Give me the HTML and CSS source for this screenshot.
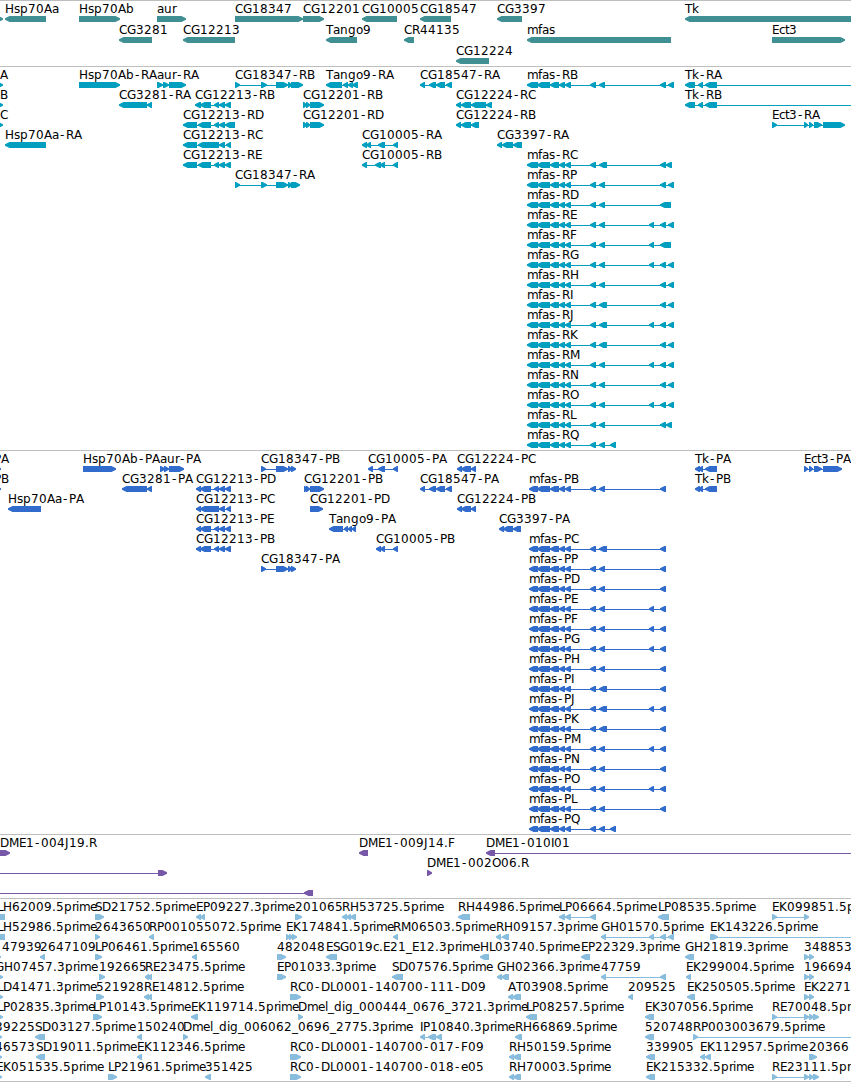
FILE: index.html
```html
<!DOCTYPE html>
<html>
<head>
    <meta charset="utf-8">
    <title>Genome Browser</title>
    <link rel="stylesheet" href="styles.css">
</head>
<body>
    <div class="browser">
        <svg class="track genes" id="genes"></svg>
        <svg class="track transcripts" id="transcripts"></svg>
        <svg class="track proteins" id="proteins"></svg>
        <svg class="track bacs" id="bacs"></svg>
        <svg class="track ests" id="ests"></svg>
    </div>
    <script src="tracks.js"></script>
</body>
</html>
```

FILE: styles.css
```css
body {
    margin: 0;
    background-color: #fff;
}

.browser {
    display: flex;
    flex-direction: column;
    width: 851px;
    height: 1082px;
    overflow: hidden;
}

.track {
    display: block;
    box-sizing: border-box;
    flex: none;
    width: 851px;
    border-top: 1px solid #bebebe;
    overflow: hidden;
}

.track text {
    font-family: "DejaVu Sans", sans-serif;
    font-size: 12px;
    fill: #000;
}

.genes {
    height: 66px;
    color: #3f8f93;
}

.transcripts {
    height: 384px;
    color: #009fbf;
}

.proteins {
    height: 384px;
    color: #316ccc;
}

.bacs {
    height: 64px;
    color: #7757a7;
}

.ests {
    height: 184px;
    color: #88bddd;
    border-bottom: 1px solid #bebebe;
}

.exon {
    fill: currentColor;
}

.intron {
    fill: currentColor;
}
```

FILE: tracks.js
```js
// each feature: [label, label x, row, strand, exons]
var genes = [
    ["", 0, 0, ">", "-20:3"],
    ["Hsp70Aa", 5, 0, "<", "5:46"],
    ["Hsp70Ab", 79, 0, ">", "79:120"],
    ["CG3281", 119, 1, "<", "119:152"],
    ["aur", 157, 0, ">", "157:186"],
    ["CG12213", 183, 1, "<", "183:235"],
    ["CG18347", 235, 0, ">", "235:303"],
    ["CG12201", 303, 0, ">", "303:324"],
    ["Tango9", 326, 1, "<", "326:357"],
    ["CG10005", 362, 0, "<", "362:397"],
    ["CR44135", 404, 1, "<", "404:414"],
    ["CG18547", 420, 0, "<", "420:451"],
    ["CG12224", 456, 2, "<", "456:489"],
    ["CG3397", 497, 0, "<", "497:522"],
    ["mfas", 527, 1, "<", "527:671"],
    ["Tk", 685, 0, "<", "685:900"],
    ["Ect3", 772, 1, ">", "772:845"]
];

var transcripts = [
    ["A", 0, 0, ">", "-20:3"],
    ["B", 0, 1, ">", "-20:3"],
    ["C", 0, 2, ">", "-20:3"],
    ["Hsp70Aa-RA", 5, 3, "<", "5:46"],
    ["Hsp70Ab-RA", 79, 0, ">", "79:120"],
    ["CG3281-RA", 119, 1, "<", "119:147 147:152"],
    ["aur-RA", 157, 0, ">", "157:163 163:169 169:186"],
    ["CG12213-RB", 195, 1, "<", "195:201 200:211 214:219 219:225 225:231"],
    ["CG12213-RD", 183, 2, "<", "183:197 198:211 214:219 219:225 225:235"],
    ["CG12213-RC", 183, 3, "<", "183:197 198:219 219:225 226:231"],
    ["CG12213-RE", 183, 4, "<", "183:197 198:211 214:219 219:225 225:231"],
    ["CG18347-RB", 235, 0, ">", "235:240 261:267 276:283 279:288 288:292 291:303"],
    ["CG18347-RA", 235, 5, ">", "235:240 261:267 276:283 279:288 288:292 291:300"],
    ["CG12201-RB", 303, 1, ">", "303:307 306:310 310:324"],
    ["CG12201-RD", 303, 2, ">", "303:307 306:310 310:324"],
    ["Tango9-RA", 326, 0, "<", "326:342 343:348 348:353 352:358"],
    ["CG10005-RA", 362, 3, "<", "362:367 366:371 378:385 393:398"],
    ["CG10005-RB", 362, 4, "<", "362:367 375:381 380:385 393:398"],
    ["CG18547-RA", 420, 0, "<", "420:425 429:436 436:445 446:452"],
    ["CG12224-RC", 456, 1, "<", "456:461 461:471 471:486 486:492"],
    ["CG12224-RB", 456, 2, "<", "456:461 461:471 471:479"],
    ["CG3397-RA", 497, 3, "<", "497:502 502:513 513:522"],
    ["Tk-RA", 685, 0, "<", "685:695 698:703 705:717 900:910"],
    ["Tk-RB", 685, 1, "<", "685:695 698:703 705:717 900:910"],
    ["Ect3-RA", 772, 2, ">", "772:777 804:808 809:813 814:822 823:845"]
];

var proteins = [
    ["PA", -6, 0, ">", "-20:1"],
    ["PB", -6, 1, ">", "-20:1"],
    ["Hsp70Aa-PA", 8, 2, "<", "8:41"],
    ["Hsp70Ab-PA", 83, 0, ">", "83:116"],
    ["CG3281-PA", 122, 1, "<", "122:147 147:152"],
    ["aur-PA", 160, 0, ">", "160:165 164:169 169:184"],
    ["CG12213-PD", 196, 1, "<", "196:201 200:211 214:219 219:225 225:231"],
    ["CG12213-PC", 196, 2, "<", "196:201 200:219 219:225 226:231"],
    ["CG12213-PE", 196, 3, "<", "196:201 200:211 214:219 219:225 225:231"],
    ["CG12213-PB", 196, 4, "<", "196:201 200:211 214:219 219:225 225:231"],
    ["CG18347-PB", 261, 0, ">", "261:266 276:283 279:288 288:292 291:296"],
    ["CG18347-PA", 261, 5, ">", "261:266 276:283 279:288 288:292 291:296"],
    ["CG12201-PB", 304, 1, ">", "304:308 306:310 310:324"],
    ["CG12201-PD", 310, 2, ">", "310:323"],
    ["Tango9-PA", 329, 3, "<", "329:343 344:348 348:352 352:356"],
    ["CG10005-PA", 368, 0, "<", "368:373 378:385 393:398"],
    ["CG10005-PB", 376, 4, "<", "376:381 380:385 393:398"],
    ["CG18547-PA", 420, 1, "<", "420:425 429:436 436:445 446:452"],
    ["CG12224-PC", 457, 0, "<", "457:462 461:471 471:476"],
    ["CG12224-PB", 457, 2, "<", "457:462 461:471 471:476"],
    ["CG3397-PA", 499, 3, "<", "499:504 503:513 513:521"],
    ["Tk-PA", 695, 0, "<", "695:700 698:703 705:717"],
    ["Tk-PB", 695, 1, "<", "695:700 698:703 705:717"],
    ["Ect3-PA", 804, 0, ">", "804:808 809:813 814:822 823:842"]
];

// mfas isoforms: [letter, row, end of the 599 exon, exons after it]
var mfasTranscripts = [
    ["B", 0, 605, "660:666 668:674"],
    ["C", 4, 607, "660:666 666:672"],
    ["P", 5, 605, "660:666 668:674"],
    ["D", 6, 605, "660:671"],
    ["E", 7, 605, "649:654 660:666 668:674"],
    ["F", 8, 605, "649:654 660:671"],
    ["G", 9, 605, "649:654 660:666 668:674"],
    ["H", 10, 605, "660:666 668:674"],
    ["I", 11, 607, "660:666 668:674"],
    ["J", 12, 607, "649:654 660:666 668:674"],
    ["K", 13, 607, "660:666 668:674"],
    ["M", 14, 605, "649:654 660:666 668:674"],
    ["N", 15, 605, "660:666 668:674"],
    ["O", 16, 605, "649:654 660:666 668:674"],
    ["L", 17, 605, "660:666 666:672"],
    ["Q", 18, 605, "610:616"]
];

var mfasProteins = [
    ["B", 1, 605, "660:666"],
    ["C", 4, 607, "660:666"],
    ["P", 5, 605, "660:666"],
    ["D", 6, 605, "660:666"],
    ["E", 7, 605, "649:654 660:666"],
    ["F", 8, 605, "649:654 660:666"],
    ["G", 9, 605, "649:654 660:666"],
    ["H", 10, 605, "660:666"],
    ["I", 11, 607, "660:666"],
    ["J", 12, 607, "649:654 660:666"],
    ["K", 13, 607, "660:666"],
    ["M", 14, 605, "649:654 660:666"],
    ["N", 15, 605, "660:666"],
    ["O", 16, 605, "649:654 660:666"],
    ["L", 17, 605, "660:666"],
    ["Q", 18, 605, "610:616"]
];

mfasTranscripts.forEach(function(m) {
    transcripts.push(["mfas-R" + m[0], 527, m[1], "<",
        "527:538 537:550 550:559 559:565 565:571 590:596 599:" + m[2] + " " + m[3]]);
});

mfasProteins.forEach(function(m) {
    proteins.push(["mfas-P" + m[0], 529, m[1], "<",
        "529:538 537:550 550:559 559:565 565:571 590:596 599:" + m[2] + " " + m[3]]);
});

var bacs = [
    ["DME1-004J19.R", 0, 0, ">", "-6:10"],
    ["DME1-009J14.F", 359, 0, "<", "359:368"],
    ["DME1-010I01", 486, 0, "<", "486:495 900:910"],
    ["", 0, 1, ">", "-20:-10 158:167"],
    ["DME1-002O06.R", 427, 1, ">", "427:432"],
    ["", 0, 2, "<", "-20:-10 304:313"]
];

var ests = [
    ["LH62009.5prime", -3, 0, "<", "-12:5"],
    ["SD21752.5prime", 95, 0, ">", "95:104"],
    ["EP09227.3prime", 196, 0, "<", "196:201 200:205"],
    ["201065", 295, 0, ">", "295:302"],
    ["RH53725.5prime", 342, 0, "<", "342:347 346:351 350:356"],
    ["RH44986.5prime", 458, 0, "<", "458:470"],
    ["LP06664.5prime", 559, 0, "<", "559:565 565:571 590:596"],
    ["LP08535.5prime", 658, 0, "<", "658:669"],
    ["EK099851.5prime", 772, 0, ">", "772:777 804:809"],

    ["LH52986.5prime", -3, 1, "<", "-12:5"],
    ["2643650", 95, 1, ">", "95:100"],
    ["RP001055072.5prime", 149, 1, "<", "149:154"],
    ["EK174841.5prime", 286, 1, ">", "286:290 289:293 292:297"],
    ["RM06503.5prime", 393, 1, "<", "393:398"],
    ["RH09157.3prime", 496, 1, "<", "496:501 502:509"],
    ["GH01570.5prime", 601, 1, "<", "601:606 649:654 660:666 668:674"],
    ["EK143226.5prime", 710, 1, ">", "710:718 900:910"],

    ["47939", 2, 2, ">", "-8:1"],
    ["2647109", 40, 2, "<", "40:45"],
    ["LP06461.5prime", 95, 2, ">", "95:102"],
    ["165560", 192, 2, "<", "192:197"],
    ["482048", 277, 2, ">", "277:286"],
    ["ESG019c.E21_E12.3prime", 326, 2, "<", "326:337"],
    ["HL03740.5prime", 480, 2, "<", "480:489"],
    ["EP22329.3prime", 581, 2, "<", "581:590"],
    ["GH21819.3prime", 685, 2, "<", "685:694"],
    ["348853", 804, 2, ">", "804:809 809:814"],

    ["GH07457.3prime", -5, 3, ">", "-8:3"],
    ["192665", 99, 3, ">", "99:105"],
    ["RE23475.5prime", 145, 3, "<", "145:149 147:152"],
    ["EP01033.3prime", 277, 3, ">", "277:286"],
    ["SD07576.5prime", 392, 3, "<", "392:403"],
    ["GH02366.3prime", 497, 3, "<", "497:502 501:509"],
    ["47759", 601, 3, "<", "601:606 660:666"],
    ["EK299004.5prime", 686, 3, "<", "686:691"],
    ["196694", 804, 3, ">", "804:809 809:814"],

    ["LD41471.3prime", -3, 4, ">", "-8:3"],
    ["521928", 96, 4, ">", "96:104"],
    ["RE14812.5prime", 144, 4, "<", "144:149 147:152"],
    ["RC0-DL0001-140700-111-D09", 290, 4, ">", "290:301"],
    ["AT03908.5prime", 508, 4, "<", "508:513 512:521"],
    ["209525", 628, 4, "<", "628:633"],
    ["EK250505.5prime", 687, 4, "<", "687:695"],
    ["EK2271", 804, 4, ">", "804:809 809:814"],

    ["LP02835.3prime", -3, 5, ">", "-8:3"],
    ["LP10143.5prime", 93, 5, ">", "93:102"],
    ["EK119714.5prime", 191, 5, "<", "191:198"],
    ["Dmel_dig_000444_0676_3721.3prime", 298, 5, ">", "298:303"],
    ["LP08257.5prime", 526, 5, "<", "526:537"],
    ["EK307056.5prime", 645, 5, "<", "645:654"],
    ["RE70048.5prime", 772, 5, ">", "772:777 804:809 809:814 813:819"],

    ["39225", -5, 6, ">", "-8:2"],
    ["SD03127.5prime", 35, 6, "<", "35:45"],
    ["150240", 137, 6, "<", "137:142"],
    ["Dmel_dig_006062_0696_2775.3prime", 183, 6, ">", "183:188"],
    ["IP10840.3prime", 420, 6, "<", "420:425 428:436 436:442"],
    ["RH66869.5prime", 515, 6, "<", "515:522"],
    ["520748", 645, 6, "<", "645:654"],
    ["RP003003679.5prime", 693, 6, ">", "693:698 900:910"],

    ["46573", -5, 7, ">", "-8:2"],
    ["SD19011.5prime", 36, 7, "<", "36:45"],
    ["EK112346.5prime", 137, 7, "<", "137:142"],
    ["RC0-DL0001-140700-017-F09", 290, 7, ">", "290:301"],
    ["RH50159.5prime", 509, 7, "<", "509:514 513:521"],
    ["339905", 646, 7, "<", "646:655"],
    ["EK112957.5prime", 700, 7, "<", "700:705 705:711"],
    ["20366", 809, 7, ">", "809:817"],

    ["EK051535.5prime", -4, 8, ">", "-8:2"],
    ["LP21961.5prime", 108, 8, ">", "108:117"],
    ["351425", 205, 8, "<", "205:211"],
    ["RC0-DL0001-140700-018-e05", 290, 8, ">", "290:301"],
    ["RH70003.5prime", 509, 8, "<", "509:514 513:521"],
    ["EK215332.5prime", 646, 8, "<", "646:655"],
    ["RE23111.5prime", 772, 8, ">", "772:777 804:809 809:814 813:819"]
];

// whole-pixel character widths, anything not listed (digits too) is 8
var widths = {
    "-": 7, ".": 4, "_": 6, A: 8, D: 9, E: 7, F: 7, G: 9, H: 9, I: 3, J: 4, L: 6, M: 10,
    N: 9, O: 9, P: 7, Q: 9, S: 7, T: 7, B: 7, a: 7, c: 6, e: 7, f: 4, i: 3,
    k: 7, l: 3, m: 11, o: 7, r: 4, s: 6, t: 4, u: 8
};

function add(svg, tag, attrs) {
    var el = document.createElementNS("http://www.w3.org/2000/svg", tag);
    for (var key in attrs) {
        el.setAttribute(key, attrs[key]);
    }
    svg.appendChild(el);
    return el;
}

function drawTrack(id, features, rowHeight) {
    var svg = document.getElementById(id);
    features.forEach(function(f) {
        var top = f[2] * rowHeight + 15;
        var exons = f[4].split(" ").map(function(e) {
            return e.split(":").map(Number);
        });
        var start = exons[0][0];
        var end = exons[exons.length - 1][1];

        if (exons.length > 1) {
            add(svg, "rect", { "class": "intron", x: start + 1, y: top + 3, width: end - start - 2, height: 1 });
        }

        exons.forEach(function(e) {
            var head = Math.min(4.5, e[1] - e[0] - 1);
            var tip = f[3] == "<" ? e[0] : e[1];
            var tail = f[3] == "<" ? e[1] : e[0];
            var neck = f[3] == "<" ? tip + head : tip - head;
            // slightly blunt tip
            add(svg, "polygon", {
                "class": "exon",
                points: [tip, top + 2.3, neck, top, tail, top, tail, top + 6, neck, top + 6, tip, top + 3.7].join(" ")
            });
        });

        if (f[0]) {
            var x = f[1];
            var xs = [];
            for (var i = 0; i < f[0].length; i++) {
                // the hyphen is narrow, centre it in its cell
                xs.push(f[0][i] == "-" ? x + 1 : x);
                x += widths[f[0][i]] || 8;
            }
            add(svg, "text", { x: xs.join(" "), y: f[2] * rowHeight + 12 }).textContent = f[0];
        }
    });
}

drawTrack("genes", genes, 21);
drawTrack("transcripts", transcripts, 20);
drawTrack("proteins", proteins, 20);
drawTrack("bacs", bacs, 20);
drawTrack("ests", ests, 20);
```
